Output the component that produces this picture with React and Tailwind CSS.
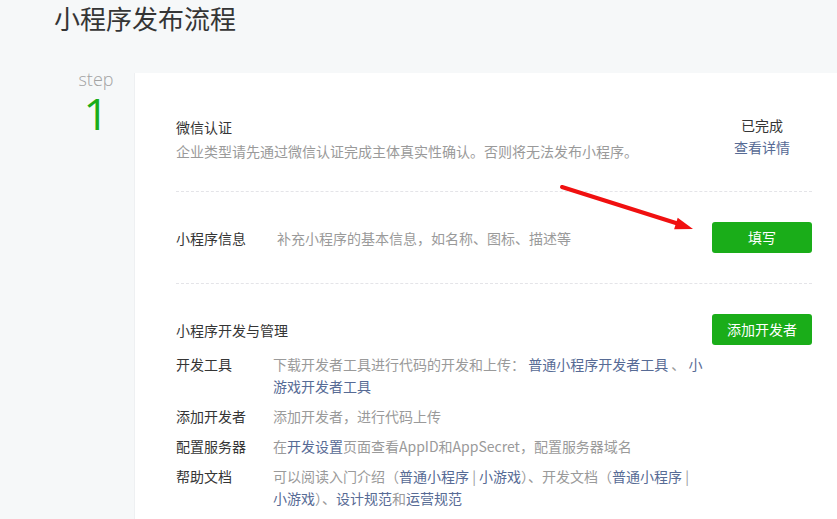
import React from "react";

const font = { fontFamily: '"Noto Sans CJK SC", "Noto Sans", sans-serif' };

function Link({ children }) {
  return <a className="text-[#576b95] cursor-pointer">{children}</a>;
}

function GreenButton({ children }) {
  return (
    <button className="w-[100px] h-[31px] rounded-[3px] bg-[#1aad19] text-white text-[14px] leading-[31px] shrink-0">
      {children}
    </button>
  );
}

const devRows = [
  {
    label: "开发工具",
    desc: (
      <>
        下载开发者工具进行代码的开发和上传： <Link>普通小程序开发者工具</Link> 、 <Link>小游戏开发者工具</Link>
      </>
    ),
  },
  { label: "添加开发者", desc: <>添加开发者，进行代码上传</> },
  {
    label: "配置服务器",
    desc: (
      <>
        在<Link>开发设置</Link>页面查看AppID和AppSecret，配置服务器域名
      </>
    ),
  },
  {
    label: "帮助文档",
    desc: (
      <>
        可以阅读入门介绍（<Link>普通小程序</Link> | <Link>小游戏</Link>）、开发文档（<Link>普通小程序</Link> |{" "}
        <Link>小游戏</Link>）、<Link>设计规范</Link>和<Link>运营规范</Link>
      </>
    ),
  },
];

export default function App() {
  return (
    <div className="relative min-h-screen bg-[#f6f8f9] text-[#353535]" style={font}>
      <h1 className="pl-[54px] text-[26px] leading-[36px] font-normal">小程序发布流程</h1>

      <div className="flex mt-[37px]">
        <div className="w-[134px] pl-[58px] shrink-0 text-center" style={{ fontFamily: '"Open Sans", "Noto Sans", sans-serif' }}>
          <div className="-mt-[4px] text-[18px] leading-[20px] font-light text-[#a3a3a3]">step</div>
          <div className="mt-[2px] text-[44px] leading-[44px] font-normal text-[#1aad19]">1</div>
        </div>

        <div className="flex-1 bg-white border-l border-[#eef0f2] pl-[41px] pr-[25px] pb-[40px] text-[14px] leading-[22px]">
          <div className="flex justify-between pt-[41px] pb-[29px] border-b border-dashed border-[#e4e4e8]">
            <div className="pt-[2px]">
              <div>微信认证</div>
              <div className="mt-[2px] text-[#9a9a9a]">企业类型请先通过微信认证完成主体真实性确认。否则将无法发布小程序。</div>
            </div>
            <div className="w-[100px] text-center">
              <div>已完成</div>
              <div>
                <Link>查看详情</Link>
              </div>
            </div>
          </div>

          <div className="flex items-center justify-between py-[30px] border-b border-dashed border-[#e4e4e8]">
            <div className="flex">
              <div className="w-[101px]">小程序信息</div>
              <div className="text-[#9a9a9a]">补充小程序的基本信息，如名称、图标、描述等</div>
            </div>
            <GreenButton>填写</GreenButton>
          </div>

          <div className="pt-[30px]">
            <div className="flex items-center justify-between">
              <div>小程序开发与管理</div>
              <GreenButton>添加开发者</GreenButton>
            </div>
            <div className="mt-[8px] flex flex-col gap-[8px]">
              {devRows.map((r) => (
                <div key={r.label} className="flex">
                  <div className="w-[97px] shrink-0">{r.label}</div>
                  <div className="w-[431px] text-[#9a9a9a]">{r.desc}</div>
                </div>
              ))}
            </div>
          </div>
        </div>
      </div>

      <svg className="absolute left-[555px] top-[180px] pointer-events-none" width="145" height="55" viewBox="0 0 145 55">
        <line x1="7" y1="7" x2="124" y2="44" stroke="#f01010" strokeWidth="4" strokeLinecap="round" />
        <polygon points="138,49 119.1,49.2 122.7,37.8" fill="#f01010" />
      </svg>
    </div>
  );
}
